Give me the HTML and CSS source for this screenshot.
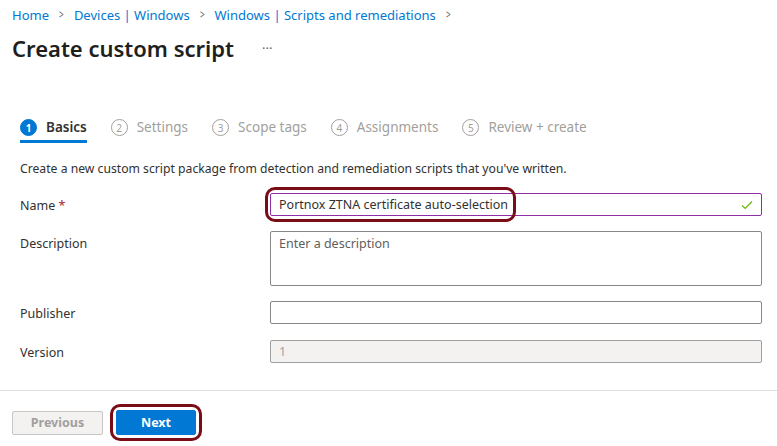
FILE: index.html
```html
<!DOCTYPE html>
<html>
<head>
<meta charset="utf-8">
<link rel="stylesheet" href="styles.css">
</head>
<body>
<div class="page">
  <header class="top">
    <nav class="crumbs">
      <a>Home</a><span class="chev">&gt;</span>
      <a>Devices | Windows</a><span class="chev">&gt;</span>
      <a>Windows | Scripts and remediations</a><span class="chev">&gt;</span>
    </nav>
    <div class="title-row">
      <h1>Create custom script</h1>
      <span class="more">···</span>
    </div>
  </header>

  <div class="steps">
    <div class="step active"><span class="num">1</span><span class="lbl">Basics</span></div>
    <div class="step"><span class="num">2</span><span class="lbl">Settings</span></div>
    <div class="step"><span class="num">3</span><span class="lbl">Scope tags</span></div>
    <div class="step"><span class="num">4</span><span class="lbl">Assignments</span></div>
    <div class="step"><span class="num">5</span><span class="lbl">Review + create</span></div>
  </div>

  <p class="intro">Create a new custom script package from detection and remediation scripts that you've written.</p>

  <div class="form">
    <div class="row">
      <label class="label">Name <span class="req">*</span></label>
      <div class="field">
        <div class="input valid">
          <span class="val">Portnox ZTNA certificate auto-selection</span>
          <svg class="check" width="12" height="10" viewBox="0 0 12 10"><path d="M1 5.5 L4.2 8.5 L11 1.5" fill="none" stroke="#6bb700" stroke-width="1.2"/></svg>
        </div>
        <span class="mark mark-name"></span>
      </div>
    </div>
    <div class="row">
      <label class="label">Description</label>
      <div class="field">
        <div class="input area"><span class="ph">Enter a description</span></div>
      </div>
    </div>
    <div class="row">
      <label class="label">Publisher</label>
      <div class="field"><div class="input"></div></div>
    </div>
    <div class="row row-last">
      <label class="label">Version</label>
      <div class="field"><div class="input disabled"><span class="dis">1</span></div></div>
    </div>
  </div>

  <footer class="foot">
    <button class="btn prev">Previous</button>
    <div class="next-wrap">
      <button class="btn next">Next</button>
      <span class="mark mark-next"></span>
    </div>
  </footer>
</div>
</body>
</html>
```

FILE: styles.css
```css
* { box-sizing: border-box; }
html, body { margin: 0; padding: 0; background: #fff; }
body {
  font-family: "Noto Sans", "Open Sans", sans-serif;
  color: #323130;
  width: 777px;
  height: 446px;
  overflow: hidden;
}
.page { display: flex; flex-direction: column; }

.top { padding: 4px 12px 0 12px; }
.crumbs { display: flex; align-items: center; font-size: 13px; height: 21px; }
.crumbs a { color: #0078d4; }
.chev { color: #605e5c; margin: 0 9px; font-size: 12px; transform: scaleX(0.7); display: inline-block; }
.title-row { display: flex; align-items: center; margin-top: 8px; height: 30px; }
h1 { margin: 0; font-size: 22px; font-weight: 600; color: #201f1e; letter-spacing: 0; }
.more { margin-left: 28px; color: #605e5c; font-size: 13px; }

.steps { display: flex; gap: 24px; padding: 0 20px; margin-top: 49px; height: 31px; }
.step { display: flex; align-items: flex-start; gap: 9px; color: #a19f9d; font-size: 13.5px; padding-top: 6px; }
.step .num {
  width: 17px; height: 17px; border-radius: 50%;
  border: 1px solid #a19f9d; font-size: 10px;
  display: flex; align-items: center; justify-content: center;
  margin-top: 1px;
}
.step.active { border-bottom: 3px solid #0078d4; color: #323130; font-weight: 600; }
.step.active .num { background: #0078d4; border-color: #0078d4; color: #fff; font-weight: 700; }

.intro { margin: 17px 20px 0 20px; font-size: 12.2px; height: 18px; line-height: 18px; }

.form { display: flex; flex-direction: column; gap: 15px; padding: 0 15px 0 20px; margin-top: 15px; }
.row { display: flex; align-items: flex-start; }
.row-last { margin-top: 1px; }
.label { width: 250px; font-size: 12.5px; line-height: 23px; padding-top: 1px; height: 23px; }
.req { color: #a4262c; }
.field { flex: 1; position: relative; }
.input {
  height: 23px; border: 1px solid #8a8886; border-radius: 2px;
  display: flex; align-items: center; padding: 0 8px; font-size: 12.5px;
}
.input.valid { border-color: #8f2fa6; justify-content: space-between; }
.input.area { height: 55px; align-items: flex-start; padding-top: 3px; }
.ph { color: #605e5c; }
.input.disabled { background: #f3f2f1; border-color: #a19f9d; }
.dis { color: #a19f9d; }

.mark {
  position: absolute; border: 3px solid #7a0c17; border-radius: 10px; pointer-events: none;
}
.mark-name { left: -5px; top: -6px; width: 251px; height: 35px; }

.foot {
  margin-top: 27px; border-top: 1px solid #e1dfdd;
  display: flex; align-items: center; gap: 13px; padding: 19px 12px 0 12px;
}
.btn {
  font-family: inherit; font-size: 12.5px; font-weight: 700; border-radius: 2px;
  height: 24px; padding: 0; cursor: default;
}
.prev { width: 91px; background: #f3f2f1; border: 1px solid #c8c6c4; color: #a19f9d; }
.next-wrap { position: relative; }
.next { width: 80px; height: 25px; background: #0078d4; border: 1px solid #0078d4; color: #fff; }
.mark-next { left: -6px; top: -6px; width: 92px; height: 37px; }
```
